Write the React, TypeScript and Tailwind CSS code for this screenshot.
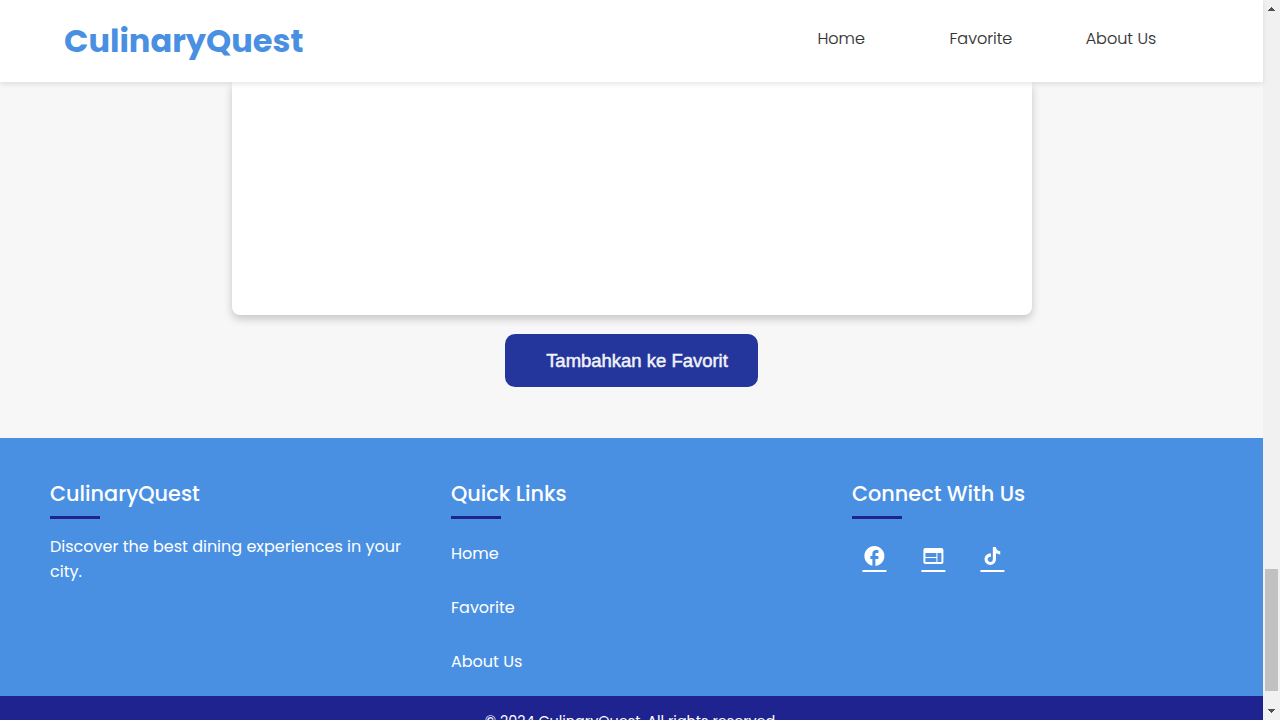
import type { ReactNode } from "react";
import { MdFacebook, MdWeb } from "react-icons/md";

function TiktokIcon() {
  return (
    <svg className="size-6" viewBox="0 0 24 24" fill="currentColor">
      <path d="M16.6 5.82A4.278 4.278 0 0 1 15.54 3h-3.09v12.4a2.592 2.592 0 0 1-2.59 2.5c-1.42 0-2.6-1.16-2.6-2.6 0-1.72 1.66-3.01 3.37-2.48V9.66c-3.45-.46-6.47 2.22-6.47 5.64 0 3.33 2.76 5.7 5.69 5.7 3.14 0 5.69-2.55 5.69-5.7V9.01a7.35 7.35 0 0 0 4.3 1.38V7.3s-1.88.09-3.24-1.48z" />
    </svg>
  );
}

function FooterColumn({ title, children }: { title: string; children: ReactNode }) {
  return (
    <section className="pt-10">
      <h3 className="h-[38px] text-[20.8px] leading-8 font-medium whitespace-nowrap">{title}</h3>
      <div className="h-[3px] w-[50px] bg-[#1e238f]" />
      {children}
    </section>
  );
}

export default function App() {
  return (
    <div className="flex h-[720px] w-full overflow-hidden bg-[#f7f7f7] font-[Poppins,Inter,sans-serif]">
      <div className="flex min-w-0 flex-1 flex-col">
        <header className="z-10 flex h-[82px] shrink-0 items-center bg-white pl-16 shadow-[0_2px_5px_rgba(0,0,0,0.1)]">
          <div className="w-[753.4px] text-[32px] leading-[48px] font-bold whitespace-nowrap text-[#4a90e2]">
            CulinaryQuest
          </div>
          <nav className="flex pb-1 text-base leading-6 font-light whitespace-nowrap text-[#333] [-webkit-text-stroke:0.15px_#333]">
            <a className="w-[132.1px]">Home</a>
            <a className="w-[136.2px]">Favorite</a>
            <a>About Us</a>
          </nav>
        </header>
        <main className="flex h-[356px] shrink-0 flex-col items-center">
          <div className="h-[233px] w-[800px] rounded-b-lg bg-white shadow-[0_4px_8px_rgba(0,0,0,0.2)]" />
          <button className="mt-[19px] h-[53px] w-[253px] rounded-[10px] bg-[#24369b] pl-[11px] font-['Liberation_Sans',sans-serif] text-[18.48px] font-normal whitespace-nowrap text-[#f1f2fa] [-webkit-text-stroke:0.5px_#f1f2fa]">
            Tambahkan ke Favorit
          </button>
        </main>
        <footer className="shrink-0 text-white">
          <div className="grid h-[258px] grid-cols-3 gap-10 bg-[#4a90e2] px-[50px]">
            <FooterColumn title="CulinaryQuest">
              <p className="mt-[15px] text-base leading-[25px]">
                Discover the best dining experiences in your city.
              </p>
            </FooterColumn>
            <FooterColumn title="Quick Links">
              <ul className="mt-[23px] flex flex-col gap-[30px] text-base leading-6">
                <li>Home</li>
                <li>Favorite</li>
                <li>About Us</li>
              </ul>
            </FooterColumn>
            <FooterColumn title="Connect With Us">
              <div className="mt-[25px] flex translate-x-[0.4px] gap-[35px] pl-2.5">
                <a className="h-7 border-b-2 border-white"><MdFacebook size={24} /></a>
                <a className="h-7 border-b-2 border-white"><MdWeb size={24} /></a>
                <a className="h-7 border-b-2 border-white"><TiktokIcon /></a>
              </div>
            </FooterColumn>
          </div>
          <div className="h-16 bg-[#1e238f] pt-[14px] text-center text-[14.4px] leading-[22px]">
            © 2024 CulinaryQuest. All rights reserved.
          </div>
        </footer>
      </div>
      <div className="flex w-[17px] shrink-0 flex-col items-center bg-[#f1f1f1]">
        <svg className="mt-[7px] h-1 w-[7px]" viewBox="0 0 7 4" fill="#505050" shapeRendering="crispEdges"><path d="M3 0h1v1h1v1h1v1h1v1H0V3h1V2h1V1h1z" /></svg>
        <div className="mt-[558px] h-[122px] w-[13px] bg-[#c1c1c1]" />
        <svg className="mt-[18px] h-1 w-[7px]" viewBox="0 0 7 4" fill="#505050" shapeRendering="crispEdges"><path d="M0 0h7v1H6v1H5v1H4v1H3V3H2V2H1V1H0z" /></svg>
      </div>
    </div>
  );
}
